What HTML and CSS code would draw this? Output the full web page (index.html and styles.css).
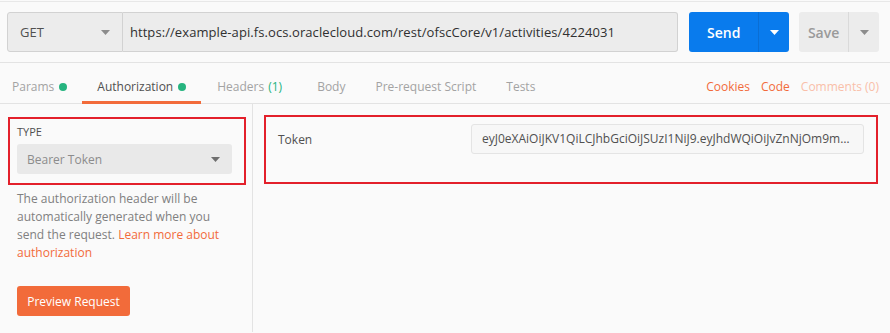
FILE: index.html
```html
<!DOCTYPE html>
<html>
<head>
<meta charset="utf-8">
<link rel="stylesheet" href="styles.css">
</head>
<body>
<div class="app">
  <div class="request-row">
    <div class="method">
      <span>GET</span>
      <svg class="caret" width="9" height="5" viewBox="0 0 9 5"><path d="M0 0h9L4.5 5z" fill="#8c8c8c"/></svg>
    </div>
    <div class="url">https://example-api.fs.ocs.oraclecloud.com/rest/ofscCore/v1/activities/4224031</div>
    <div class="send">
      <span class="send-label">Send</span>
      <span class="send-caret"><svg width="9" height="5" viewBox="0 0 9 5"><path d="M0 0h9L4.5 5z" fill="#ffffff"/></svg></span>
    </div>
    <div class="save">
      <span class="save-label">Save</span>
      <span class="save-caret"><svg width="9" height="5" viewBox="0 0 9 5"><path d="M0 0h9L4.5 5z" fill="#8c8c8c"/></svg></span>
    </div>
  </div>
  <div class="tabs-row">
    <div class="tabs">
      <div class="tab">Params <span class="dot"></span></div>
      <div class="tab active">Authorization <span class="dot"></span></div>
      <div class="tab tab-headers">Headers <span class="count">(1)</span></div>
      <div class="tab">Body</div>
      <div class="tab">Pre-request Script</div>
      <div class="tab">Tests</div>
    </div>
    <div class="links">
      <span class="link">Cookies</span>
      <span class="link">Code</span>
      <span class="link faded">Comments (0)</span>
    </div>
  </div>
  <div class="content">
    <div class="left">
      <div class="type-box">
        <div class="type-label">TYPE</div>
        <div class="select">
          <span>Bearer Token</span>
          <svg width="9" height="5" viewBox="0 0 9 5"><path d="M0 0h9L4.5 5z" fill="#6f6f6f"/></svg>
        </div>
      </div>
      <p class="desc">The authorization header will be automatically generated when you send the request. <span class="orange">Learn more about authorization</span></p>
      <div class="preview">Preview Request</div>
    </div>
    <div class="right">
      <div class="token-box">
        <div class="token-label">Token</div>
        <div class="token-input">eyJ0eXAiOiJKV1QiLCJhbGciOiJSUzI1NiJ9.eyJhdWQiOiJvZnNjOm9mc2NBcGkiLCJpc3Mi</div>
      </div>
    </div>
  </div>
</div>
</body>
</html>
```
FILE: styles.css
```css
* { box-sizing: border-box; }
html, body { margin: 0; padding: 0; }
body {
  background: #fafafa;
  font-family: "Open Sans", "Liberation Sans", sans-serif;
  font-size: 13px;
  color: #505050;
  width: 890px;
  height: 333px;
  overflow: hidden;
}
.app {
  margin-top: 1px;
  border-top: 1px solid #e8e8e8;
}
.request-row {
  display: flex;
  align-items: stretch;
  padding: 10px 11px 10px 7px;
  border-bottom: 1px solid #e3e3e3;
  height: 61px;
}
.method {
  width: 116px;
  height: 40px;
  background: #ececec;
  border: 1px solid #d2d2d2;
  border-radius: 3px 0 0 3px;
  display: flex;
  align-items: center;
  justify-content: space-between;
  padding: 0 12px 0 12px;
  font-size: 13px;
  color: #505050;
}
.url {
  width: 556px;
  height: 40px;
  background: #ececec;
  border: 1px solid #d2d2d2;
  border-left: none;
  border-radius: 0 3px 3px 0;
  display: flex;
  align-items: center;
  padding-left: 7px;
  font-size: 13px;
  letter-spacing: 0.08px;
  color: #303030;
  white-space: nowrap;
  overflow: hidden;
}
.send {
  margin-left: 11px;
  width: 100px;
  height: 40px;
  background: #097bed;
  border-radius: 3px;
  display: flex;
  color: #fff;
}
.send-label {
  width: 69px;
  display: flex;
  align-items: center;
  justify-content: center;
  font-weight: 600;
  font-size: 14px;
}
.send-caret {
  flex: 1;
  border-left: 1px solid #0a6ed4;
  display: flex;
  align-items: center;
  justify-content: center;
}
.save {
  margin-left: 10px;
  width: 80px;
  height: 40px;
  background: #ececec;
  border-radius: 3px;
  display: flex;
  color: #9a9a9a;
}
.save-label {
  width: 49px;
  display: flex;
  align-items: center;
  justify-content: center;
  font-weight: 600;
  font-size: 14px;
}
.save-caret {
  flex: 1;
  border-left: 1px solid #dadada;
  display: flex;
  align-items: center;
  justify-content: center;
}
.tabs-row {
  display: flex;
  justify-content: space-between;
  align-items: stretch;
  height: 41px;
  border-bottom: 1px solid #e3e3e3;
}
.tabs {
  display: flex;
  margin-left: -3px;
}
.tab {
  padding: 9px 15px 0 15px;
  display: flex;
  align-items: center;
  font-size: 12px;
  color: #a3a3a3;
  border-bottom: 3px solid transparent;
  margin-bottom: -1px;
}
.tab.active {
  color: #505050;
  border-bottom-color: #f26b3a;
}
.tab-headers { padding-left: 16px; padding-right: 20px; }
.dot {
  display: inline-block;
  width: 8px;
  height: 8px;
  border-radius: 50%;
  background: #26b47f;
  margin-left: 5px;
}
.count { color: #26b47f; margin-left: 4px; }
.links {
  display: flex;
  align-items: center;
  gap: 11px;
  padding-right: 11px;
  padding-top: 6px;
  font-size: 12px;
}
.link { color: #f26b3a; }
.link.faded { color: #f9bfa9; }
.content {
  display: flex;
  height: 228px;
}
.left {
  width: 253px;
  border-right: 1px solid #e3e3e3;
  padding: 13px 6px 0 8px;
}
.type-box {
  border: 2px solid #e3202b;
  height: 68px;
  padding: 4px 12px 0 7px;
}
.type-label {
  font-size: 11px;
  color: #505050;
  line-height: 15px;
  margin-top: 1px;
}
.select {
  margin-top: 5px;
  height: 30px;
  background: #e9e9e9;
  border-radius: 3px;
  display: flex;
  align-items: center;
  justify-content: space-between;
  padding: 0 12px 0 10px;
  color: #8c8c8c;
  font-size: 12px;
}
.desc {
  margin: 5px 0 0 9px;
  font-size: 12px;
  line-height: 18px;
  color: #808080;
  width: 215px;
}
.orange { color: #f26b3a; }
.preview {
  margin: 24px 0 0 9px;
  width: 113px;
  height: 30px;
  background: #f26b3a;
  border-radius: 3px;
  color: #fff;
  font-size: 12px;
  display: flex;
  align-items: center;
  justify-content: center;
}
.right {
  flex: 1;
  padding: 11px 12px 0 11px;
}
.token-box {
  border: 2px solid #e3202b;
  height: 69px;
  display: grid;
  grid-template-columns: 193px 1fr;
  align-items: start;
  padding: 7px 12px 0 12px;
}
.token-label {
  height: 30px;
  display: flex;
  align-items: center;
  font-size: 12px;
  color: #505050;
}
.token-input {
  height: 30px;
  background: #f7f7f7;
  border: 1px solid #e4e4e4;
  border-radius: 3px;
  padding: 0 10px;
  line-height: 28px;
  font-size: 12px;
  color: #505050;
  white-space: nowrap;
  overflow: hidden;
  text-overflow: ellipsis;
}
```
